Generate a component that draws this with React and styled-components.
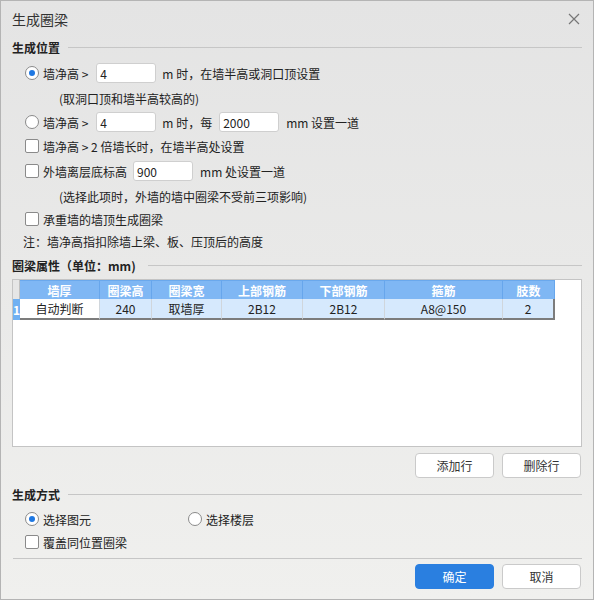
import React from "react";
import styled, { createGlobalStyle } from "styled-components";

const Global = createGlobalStyle`
  html, body { margin: 0; padding: 0; }
  body { font-family: "Noto Sans CJK SC", "Noto Sans", sans-serif; font-size: 12px; color: #222; }
  * { box-sizing: border-box; }
`;

const Window = styled.div`
  width: 594px;
  height: 600px;
  border: 1px solid #b4b4b4;
  background: linear-gradient(180deg, #e4e4e4 0%, #e9e9e8 45%, #f0f0ee 100%);
  display: flex;
  flex-direction: column;
  padding: 0 11px;
  overflow: hidden;
`;

const TitleBar = styled.div`
  height: 35px;
  display: flex;
  align-items: center;
  justify-content: space-between;
  font-size: 14px;
  color: #333;
  padding-top: 1px;
`;

const Close = styled.div`
  width: 14px;
  height: 14px;
  margin-right: 1px;
  display: flex;
  align-items: center;
  justify-content: center;
`;

const Section = styled.div`
  height: ${(p) => p.h}px;
  display: flex;
  align-items: center;
  font-weight: bold;
  color: #222;
  &::after {
    content: "";
    flex: 1;
    height: 1px;
    background: #c6c6c6;
    margin-left: ${(p) => p.gap || 8}px;
  }
`;

const Row = styled.div`
  height: ${(p) => p.h}px;
  display: flex;
  align-items: center;
  padding-left: ${(p) => p.indent}px;
  white-space: pre;
`;

const Radio = styled.span`
  width: 14px;
  height: 14px;
  border-radius: 50%;
  border: 1px solid #8a8a8a;
  background: #fff;
  margin-right: 4px;
  display: inline-flex;
  align-items: center;
  justify-content: center;
  flex-shrink: 0;
  &::after {
    content: "";
    width: 6px;
    height: 6px;
    border-radius: 50%;
    background: ${(p) => (p.checked ? "#1f78e2" : "transparent")};
  }
`;

const Check = styled.span`
  width: 14px;
  height: 14px;
  border-radius: 2px;
  border: 1px solid #8a8a8a;
  background: #fff;
  margin-right: 4px;
  flex-shrink: 0;
`;

const Input = styled.div`
  width: ${(p) => p.w || 60}px;
  height: 20px;
  background: #fff;
  border: 1px solid #cfcfcf;
  border-radius: 3px;
  padding-left: 3px;
  display: flex;
  align-items: center;
  margin-left: ${(p) => p.ml}px;
  margin-right: ${(p) => p.mr}px;
  color: #222;
  font-size: 12px;
`;

const Panel = styled.div`
  height: 168px;
  background: #fff;
  border: 1px solid #c4c4c4;
  display: flex;
  flex-direction: column;
`;

const Grid = styled.div`
  display: grid;
  grid-template-columns: 7px 80px 52px 70px 81px 82px 118px 52px;
  width: 544px;
`;

const Corner = styled.div`
  height: 19px;
  background: #e6e6e6;
  border-right: 1px solid #c0c0c0;
`;

const Head = styled.div`
  height: 19px;
  background: #7fb7f4;
  border-right: 1px solid #67a6ec;
  border-top: 1px solid #6aa8ec;
  color: #fff;
  font-weight: bold;
  display: flex;
  align-items: center;
  justify-content: center;
  font-size: 12px;
`;

const RowNum = styled.div`
  height: 21px;
  background: #6fb0f2;
  color: #fff;
  font-weight: bold;
  display: flex;
  align-items: center;
  justify-content: center;
  font-size: 12px;
  overflow: hidden;
`;

const Cell = styled.div`
  height: 21px;
  background: ${(p) => (p.active ? "#fff" : "#d6e9fd")};
  border-right: 1px solid #d0d6dc;
  border-bottom: 2px solid #7c7c7c;
  display: flex;
  align-items: center;
  justify-content: center;
  color: #222;
  font-size: 12px;
  &:last-child {
    border-right: 2px solid #7c7c7c;
  }
`;

const ButtonRow = styled.div`
  display: flex;
  justify-content: flex-end;
  gap: 8px;
  padding-top: ${(p) => p.pt}px;
  padding-bottom: ${(p) => p.pb}px;
  padding-right: 1px;
`;

const Button = styled.div`
  width: 79px;
  height: 25px;
  border-radius: 4px;
  border: 1px solid ${(p) => (p.primary ? "#2a7fe0" : "#cacaca")};
  background: ${(p) => (p.primary ? "#2a7fe0" : "#fff")};
  color: ${(p) => (p.primary ? "#fff" : "#333")};
  display: flex;
  align-items: center;
  justify-content: center;
  font-size: 12px;
`;

const RadioGrid = styled.div`
  height: ${(p) => p.h}px;
  display: grid;
  grid-template-columns: 163px auto;
  align-items: center;
  padding-left: 13px;
`;

const Option = styled.div`
  display: flex;
  align-items: center;
`;

const Divider = styled.div`
  height: 1px;
  background: #c6c6c6;
  margin-top: 6px;
  margin-left: 1px;
`;

const cols = ["墙厚", "圈梁高", "圈梁宽", "上部钢筋", "下部钢筋", "箍筋", "肢数"];
const vals = ["自动判断", "240", "取墙厚", "2B12", "2B12", "A8@150", "2"];

export default function App() {
  return (
    <>
      <Global />
      <Window>
        <TitleBar>
          <span>生成圈梁</span>
          <Close>
            <svg width="12" height="12" viewBox="0 0 12 12">
              <path d="M1 1 L11 11 M11 1 L1 11" stroke="#777" strokeWidth="1.2" fill="none" />
            </svg>
          </Close>
        </TitleBar>

        <Section h={23}>生成位置</Section>
        <Row h={28} indent={13}>
          <Radio checked />
          <span>墙净高 &gt;</span>
          <Input ml={8} mr={6}>4</Input>
          <span>m 时，在墙半高或洞口顶设置</span>
        </Row>
        <Row h={22} indent={47}>(取洞口顶和墙半高较高的)</Row>
        <Row h={26} indent={13}>
          <Radio />
          <span>墙净高 &gt;</span>
          <Input ml={8} mr={6}>4</Input>
          <span>m 时，每</span>
          <Input ml={7} mr={7}>2000</Input>
          <span>mm 设置一道</span>
        </Row>
        <Row h={22} indent={13}>
          <Check />
          <span>墙净高 &gt; 2 倍墙长时，在墙半高处设置</span>
        </Row>
        <Row h={28} indent={13}>
          <Check />
          <span>外墙离层底标高</span>
          <Input ml={6} mr={7}>900</Input>
          <span>mm 处设置一道</span>
        </Row>
        <Row h={22} indent={47}>(选择此项时，外墙的墙中圈梁不受前三项影响)</Row>
        <Row h={24} indent={13}>
          <Check />
          <span>承重墙的墙顶生成圈梁</span>
        </Row>
        <Row h={20} indent={11}>注：墙净高指扣除墙上梁、板、压顶后的高度</Row>
        <Section h={28} gap={12}>圈梁属性（单位：mm)</Section>

        <Panel>
          <Grid>
            <Corner />
            {cols.map((c) => (
              <Head key={c}>{c}</Head>
            ))}
            <RowNum>1</RowNum>
            {vals.map((v, i) => (
              <Cell key={i} active={i === 0}>
                {v}
              </Cell>
            ))}
          </Grid>
        </Panel>

        <ButtonRow pt={6} pb={4}>
          <Button>添加行</Button>
          <Button>删除行</Button>
        </ButtonRow>

        <Section h={24}>生成方式</Section>
        <RadioGrid h={26}>
          <Option>
            <Radio checked />
            <span>选择图元</span>
          </Option>
          <Option>
            <Radio />
            <span>选择楼层</span>
          </Option>
        </RadioGrid>
        <Row h={20} indent={13}>
          <Check />
          <span>覆盖同位置圈梁</span>
        </Row>
        <Divider />
        <ButtonRow pt={5} pb={0}>
          <Button primary>确定</Button>
          <Button>取消</Button>
        </ButtonRow>
      </Window>
    </>
  );
}
